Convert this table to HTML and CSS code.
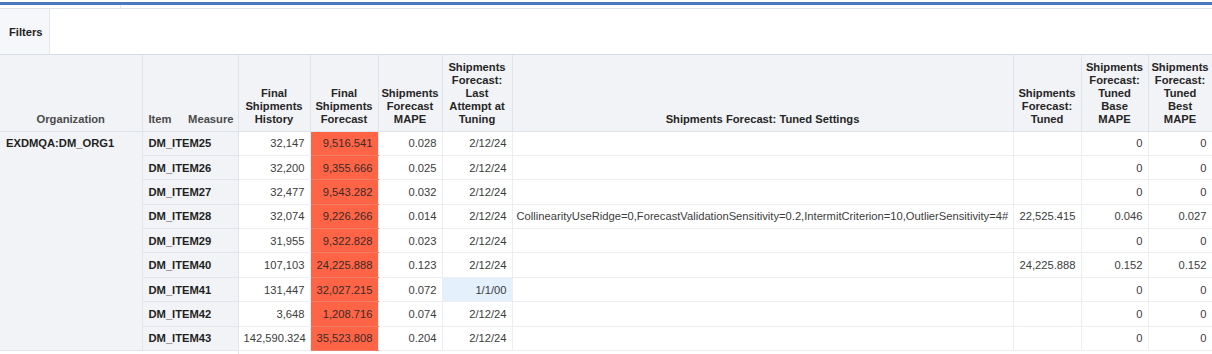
FILE: index.html
```html
<!DOCTYPE html>
<html>
<head>
<meta charset="utf-8">
<link rel="stylesheet" href="styles.css">
</head>
<body>
<div class="topbar"><div class="topbar-seg"></div><div class="topbar-rest"></div></div>
<div class="filters">
  <div class="filters-label">Filters</div>
  <div class="filters-body"></div>
</div>
<table class="grid">
  <colgroup>
    <col class="c-org"><col class="c-item"><col class="c-hist"><col class="c-fc"><col class="c-mape"><col class="c-last"><col class="c-set"><col class="c-tuned"><col class="c-base"><col class="c-best">
  </colgroup>
  <thead>
    <tr>
      <th class="h-org">Organization</th>
      <th class="h-item"><span>Item</span><span>Measure</span></th>
      <th>Final<br>Shipments<br>History</th>
      <th>Final<br>Shipments<br>Forecast</th>
      <th>Shipments<br>Forecast<br>MAPE</th>
      <th>Shipments<br>Forecast:<br>Last<br>Attempt at<br>Tuning</th>
      <th>Shipments Forecast: Tuned Settings</th>
      <th>Shipments<br>Forecast:<br>Tuned</th>
      <th>Shipments<br>Forecast:<br>Tuned<br>Base<br>MAPE</th>
      <th class="h-last">Shipments<br>Forecast:<br>Tuned<br>Best<br>MAPE</th>
    </tr>
  </thead>
  <tbody>
    <tr>
      <td class="org" rowspan="9">EXDMQA:DM_ORG1</td>
      <td class="item">DM_ITEM25</td><td class="num">32,147</td><td class="num hot">9,516.541</td><td class="num">0.028</td><td class="num">2/12/24</td><td class="txt"></td><td class="num"></td><td class="num">0</td><td class="num">0</td>
    </tr>
    <tr>
      <td class="item">DM_ITEM26</td><td class="num">32,200</td><td class="num hot">9,355.666</td><td class="num">0.025</td><td class="num">2/12/24</td><td class="txt"></td><td class="num"></td><td class="num">0</td><td class="num">0</td>
    </tr>
    <tr>
      <td class="item">DM_ITEM27</td><td class="num">32,477</td><td class="num hot">9,543.282</td><td class="num">0.032</td><td class="num">2/12/24</td><td class="txt"></td><td class="num"></td><td class="num">0</td><td class="num">0</td>
    </tr>
    <tr>
      <td class="item">DM_ITEM28</td><td class="num">32,074</td><td class="num hot">9,226.266</td><td class="num">0.014</td><td class="num">2/12/24</td><td class="txt">CollinearityUseRidge=0,ForecastValidationSensitivity=0.2,IntermitCriterion=10,OutlierSensitivity=4#</td><td class="num">22,525.415</td><td class="num">0.046</td><td class="num">0.027</td>
    </tr>
    <tr>
      <td class="item">DM_ITEM29</td><td class="num">31,955</td><td class="num hot">9,322.828</td><td class="num">0.023</td><td class="num">2/12/24</td><td class="txt"></td><td class="num"></td><td class="num">0</td><td class="num">0</td>
    </tr>
    <tr>
      <td class="item">DM_ITEM40</td><td class="num">107,103</td><td class="num hot">24,225.888</td><td class="num">0.123</td><td class="num">2/12/24</td><td class="txt"></td><td class="num">24,225.888</td><td class="num">0.152</td><td class="num">0.152</td>
    </tr>
    <tr>
      <td class="item">DM_ITEM41</td><td class="num">131,447</td><td class="num hot">32,027.215</td><td class="num">0.072</td><td class="num sel">1/1/00</td><td class="txt"></td><td class="num"></td><td class="num">0</td><td class="num">0</td>
    </tr>
    <tr>
      <td class="item">DM_ITEM42</td><td class="num">3,648</td><td class="num hot">1,208.716</td><td class="num">0.074</td><td class="num">2/12/24</td><td class="txt"></td><td class="num"></td><td class="num">0</td><td class="num">0</td>
    </tr>
    <tr>
      <td class="item">DM_ITEM43</td><td class="num">142,590.324</td><td class="num hot">35,523.808</td><td class="num">0.204</td><td class="num">2/12/24</td><td class="txt"></td><td class="num"></td><td class="num">0</td><td class="num">0</td>
    </tr>
  </tbody>
</table>
<div class="tail"><div class="tail-left"></div><div class="tail-right"></div></div>
</body>
</html>
```
FILE: styles.css
```css
html, body {
  margin: 0;
  padding: 0;
  background: #ffffff;
  font-family: "Liberation Sans", Arial, sans-serif;
  font-size: 11.2px;
  color: #333333;
  overflow: hidden;
}

.topbar {
  height: 3px;
  margin-top: 2px;
  border-top: 3px solid #4a78c2;
  border-bottom: 1px solid #dfe4ea;
  display: flex;
}
.topbar-seg {
  width: 120px;
  border-right: 1px solid #e6e9ee;
}
.topbar-rest { flex: 1; }

.filters {
  display: flex;
  height: 45px;
  border-bottom: 1px solid #d7dee7;
}
.filters-label {
  width: 40px;
  padding-left: 9px;
  display: flex;
  align-items: center;
  font-weight: bold;
  font-size: 11.2px;
  color: #222;
  background: #f6f7fa;
  border-right: 1px solid #e3e7ed;
}
.filters-body { flex: 1; }

.grid {
  width: 1212px;
  table-layout: fixed;
  border-collapse: collapse;
}
.c-org { width: 142px; }
.c-item { width: 96px; }
.c-hist { width: 72px; }
.c-fc { width: 68px; }
.c-mape { width: 64px; }
.c-last { width: 70px; }
.c-set { width: 501px; }
.c-tuned { width: 68px; }
.c-base { width: 67px; }
.c-best { width: 64px; }

.grid thead th {
  height: 76px;
  box-sizing: border-box;
  background: #f1f3f7;
  font-weight: bold;
  font-size: 11.2px;
  line-height: 13px;
  color: #262626;
  text-align: center;
  vertical-align: bottom;
  padding: 0 1px 5px 1px;
  border-right: 1px solid #dfe3ea;
  border-bottom: 1px solid #dfe3ea;
}
.grid thead th.h-org {
  color: #4a4a4a;
}
.grid thead th.h-item {
  text-align: left;
  padding-left: 6px;
  padding-right: 4px;
  color: #4a4a4a;
}
.h-item span:last-child {
  float: right;
}

.grid tbody tr { height: 24.4px; }
.grid tbody td {
  padding: 0 5px;
  white-space: nowrap;
  overflow: hidden;
  border-right: 1px solid #eceef2;
  border-bottom: 1px solid #eceef2;
  color: #3c3c3c;
  font-size: 11.2px;
}
.grid tbody td.org {
  vertical-align: top;
  padding: 5px 6px;
  font-weight: bold;
  color: #1f1f1f;
  background: #f1f3f7;
  border-right: 1px solid #e3e7ed;
  border-bottom: 1px solid #dfe3ea;
}
.grid tbody td.item {
  font-weight: bold;
  color: #1f1f1f;
  background: #f1f3f7;
  padding-left: 6px;
  border-right: 1px solid #dfe3ea;
  border-bottom: 1px solid #e3e7ed;
}
.grid tbody td.num { text-align: right; }
.grid tbody td.txt { text-align: left; padding-left: 4px; }
.grid tbody td.hot {
  background: #ff6447;
  color: #3a2a26;
  border-bottom: 1px solid #f47c66;
}
.grid tbody td.sel { background: #e4f0fc; }

.tail {
  display: flex;
  height: 10px;
}
.tail-left {
  width: 238px;
  border-right: 1px solid #e3e7ed;
}
```
